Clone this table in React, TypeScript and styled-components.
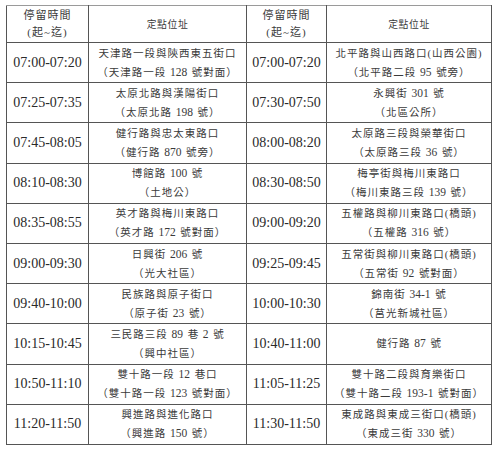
import React from 'react';
import styled, { createGlobalStyle } from 'styled-components';

interface Stop {
  time: string;
  lines: string[];
}

const rows: [Stop, Stop][] = [
  [
    { time: '07:00-07:20', lines: ['天津路一段與陝西東五街口', '（天津路一段 128 號對面）'] },
    { time: '07:00-07:20', lines: ['北平路與山西路口(山西公園)', '（北平路二段 95 號旁）'] },
  ],
  [
    { time: '07:25-07:35', lines: ['太原北路與漢陽街口', '（太原北路 198 號）'] },
    { time: '07:30-07:50', lines: ['永興街 301 號', '（北區公所）'] },
  ],
  [
    { time: '07:45-08:05', lines: ['健行路與忠太東路口', '（健行路 870 號旁）'] },
    { time: '08:00-08:20', lines: ['太原路三段與榮華街口', '（太原路三段 36 號）'] },
  ],
  [
    { time: '08:10-08:30', lines: ['博館路 100 號', '（土地公）'] },
    { time: '08:30-08:50', lines: ['梅亭街與梅川東路口', '（梅川東路三段 139 號）'] },
  ],
  [
    { time: '08:35-08:55', lines: ['英才路與梅川東路口', '（英才路 172 號對面）'] },
    { time: '09:00-09:20', lines: ['五權路與柳川東路口(橋頭)', '（五權路 316 號）'] },
  ],
  [
    { time: '09:00-09:30', lines: ['日興街 206 號', '（光大社區）'] },
    { time: '09:25-09:45', lines: ['五常街與柳川東路口(橋頭)', '（五常街 92 號對面）'] },
  ],
  [
    { time: '09:40-10:00', lines: ['民族路與原子街口', '（原子街 23 號）'] },
    { time: '10:00-10:30', lines: ['錦南街 34-1 號', '（莒光新城社區）'] },
  ],
  [
    { time: '10:15-10:45', lines: ['三民路三段 89 巷 2 號', '（興中社區）'] },
    { time: '10:40-11:00', lines: ['健行路 87 號'] },
  ],
  [
    { time: '10:50-11:10', lines: ['雙十路一段 12 巷口', '（雙十路一段 123 號對面）'] },
    { time: '11:05-11:25', lines: ['雙十路二段與育樂街口', '（雙十路二段 193-1 號對面）'] },
  ],
  [
    { time: '11:20-11:50', lines: ['興進路與進化路口', '（興進路 150 號）'] },
    { time: '11:30-11:50', lines: ['東成路與東成三街口(橋頭)', '（東成三街 330 號）'] },
  ],
];

const GlobalStyle = createGlobalStyle`
  body {
    margin: 0;
    background: #ffffff;
    font-family: "Liberation Serif", "Noto Sans CJK TC", serif;
    color: #2a2a2a;
  }
`;

const Page = styled.div`
  padding: 5px 0 0 6px;
`;

const Table = styled.table`
  border-collapse: collapse;
  table-layout: fixed;
  width: 485px;
  border-top: 1px solid #9a9a9a;
`;

const HeadCell = styled.th<{ $size?: number; $spacing?: number }>`
  height: 36px;
  padding: 0;
  border: 1px solid #555;
  border-top-color: #9a9a9a;
  font-weight: 400;
  font-size: ${({ $size }) => $size ?? 11}px;
  letter-spacing: ${({ $spacing }) => $spacing ?? 1}px;
  line-height: 17px;
  text-align: center;
  vertical-align: middle;
  color: #3a3a3a;
`;

const TimeCell = styled.td`
  height: 39.2px;
  padding: 0;
  border: 1px solid #555;
  font-size: 14px;
  text-align: center;
  vertical-align: middle;
  color: #2a2a2a;
`;

const AddressCell = styled.td`
  padding: 0;
  border: 1px solid #555;
  font-size: 10.5px;
  letter-spacing: 1px;
  line-height: 19px;
  text-align: center;
  vertical-align: middle;
  color: #3a3a3a;
  white-space: nowrap;
`;

const Line = styled.div`
  display: block;
`;

const Num = styled.span`
  font-size: 11.5px;
  letter-spacing: 0;
  margin-right: 1px;
`;

// digits keep the tight Latin spacing while the Chinese text stays spaced out
const renderLine = (text: string) =>
  text.split(/(\d[\d-]*)/).map((part, i) =>
    /^\d/.test(part) ? <Num key={i}>{part}</Num> : <React.Fragment key={i}>{part}</React.Fragment>,
  );

const App: React.FC = () => {
  return (
    <Page>
      <GlobalStyle />
      <Table>
        <colgroup>
          <col style={{ width: 82 }} />
          <col style={{ width: 158 }} />
          <col style={{ width: 80 }} />
          <col style={{ width: 165 }} />
        </colgroup>
        <thead>
          <tr>
            <HeadCell>
              <Line>停留時間</Line>
              <Line>(起~迄)</Line>
            </HeadCell>
            <HeadCell $size={9.8} $spacing={0.6}>
              定點位址
            </HeadCell>
            <HeadCell>
              <Line>停留時間</Line>
              <Line>(起~迄)</Line>
            </HeadCell>
            <HeadCell $size={9.8} $spacing={0.6}>
              定點位址
            </HeadCell>
          </tr>
        </thead>
        <tbody>
          {rows.map((pair, index) => (
            <tr key={`row-${index}`}>
              {pair.map((stop, side) => (
                <React.Fragment key={`stop-${index}-${side}`}>
                  <TimeCell>{stop.time}</TimeCell>
                  <AddressCell>
                    {stop.lines.map((line, i) => (
                      <Line key={i}>{renderLine(line)}</Line>
                    ))}
                  </AddressCell>
                </React.Fragment>
              ))}
            </tr>
          ))}
        </tbody>
      </Table>
    </Page>
  );
};

export default App;
